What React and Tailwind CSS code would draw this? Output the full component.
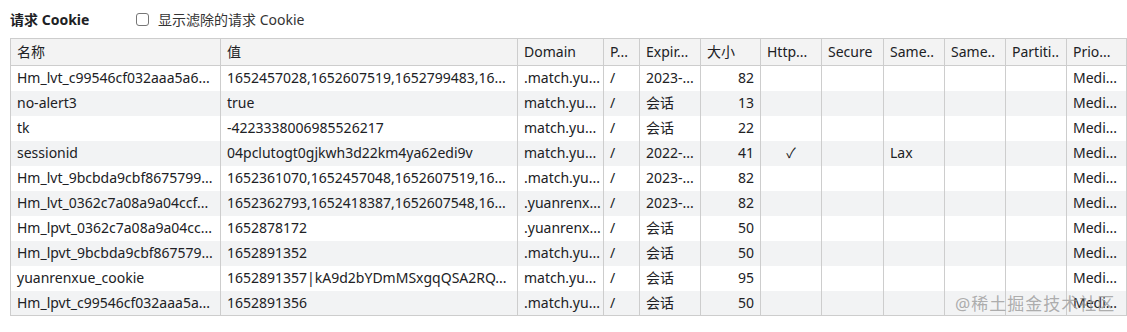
const cols = [
  { label: '名称', w: 'w-[210px]' },
  { label: '值', w: 'w-[297px]' },
  { label: 'Domain', w: 'w-[86px]' },
  { label: 'P...', w: 'w-[36px]' },
  { label: 'Expir...', w: 'w-[61px]' },
  { label: '大小', w: 'w-[60px]' },
  { label: 'Http...', w: 'w-[61px]' },
  { label: 'Secure', w: 'w-[62px]' },
  { label: 'Same..', w: 'w-[61px]' },
  { label: 'Same..', w: 'w-[61px]' },
  { label: 'Partiti..', w: 'w-[61px]' },
  { label: 'Prio...', w: 'w-[60px]' },
];

const rows = [
  ['Hm_lvt_c99546cf032aaa5a6...', '1652457028,1652607519,1652799483,16...', '.match.yu...', '/', '2023-...', '82', '', '', '', '', '', 'Medi...'],
  ['no-alert3', 'true', 'match.yu...', '/', '会话', '13', '', '', '', '', '', 'Medi...'],
  ['tk', '-4223338006985526217', 'match.yu...', '/', '会话', '22', '', '', '', '', '', 'Medi...'],
  ['sessionid', '04pclutogt0gjkwh3d22km4ya62edi9v', 'match.yu...', '/', '2022-...', '41', '✓', '', 'Lax', '', '', 'Medi...'],
  ['Hm_lvt_9bcbda9cbf8675799...', '1652361070,1652457048,1652607519,16...', '.match.yu...', '/', '2023-...', '82', '', '', '', '', '', 'Medi...'],
  ['Hm_lvt_0362c7a08a9a04ccf...', '1652362793,1652418387,1652607548,16...', '.yuanrenx...', '/', '2023-...', '82', '', '', '', '', '', 'Medi...'],
  ['Hm_lpvt_0362c7a08a9a04cc...', '1652878172', '.yuanrenx...', '/', '会话', '50', '', '', '', '', '', 'Medi...'],
  ['Hm_lpvt_9bcbda9cbf867579...', '1652891352', '.match.yu...', '/', '会话', '50', '', '', '', '', '', 'Medi...'],
  ['yuanrenxue_cookie', '1652891357|kA9d2bYDmMSxgqQSA2RQ...', 'match.yu...', '/', '会话', '95', '', '', '', '', '', 'Medi...'],
  ['Hm_lpvt_c99546cf032aaa5a...', '1652891356', '.match.yu...', '/', '会话', '50', '', '', '', '', '', 'Medi...'],
];

function cellAlign(i) {
  if (i === 5) return 'text-right pr-[6px]';
  if (i === 6) return 'text-center';
  return 'pl-[6px]';
}

export default function App() {
  return (
    <div className="relative w-[1127px] h-[332px] bg-white text-[14px] text-[#202124] font-['Noto_Sans','Noto_Sans_CJK_SC',sans-serif] overflow-hidden">
      <div className="flex items-center h-[38px] pl-[10px] pt-[1px]">
        <span className="font-bold w-[126px]">请求 Cookie</span>
        <label className="flex items-center gap-[9px] text-[#333]">
          <span className="w-[13px] h-[13px] border border-[#767676] rounded-[3px] bg-white" />
          显示滤除的请求 Cookie
        </label>
      </div>
      <div className="ml-[10px] w-[1117px]">
        <table className="table-fixed border-collapse w-[1116px] leading-[18px]">
          <colgroup>
            {cols.map((c, i) => (
              <col key={i} className={c.w} />
            ))}
          </colgroup>
          <thead>
            <tr className="bg-[#f3f3f3] h-[27px]">
              {cols.map((c, i) => (
                <th
                  key={i}
                  className="border border-[#cdcdcd] font-normal text-left pl-[6px] whitespace-nowrap overflow-hidden"
                >
                  {c.label}
                </th>
              ))}
            </tr>
          </thead>
          <tbody>
            {rows.map((r, ri) => (
              <tr key={ri} className={`h-[25px] ${ri % 2 === 1 ? 'bg-[#f2f3f4]' : 'bg-white'}`}>
                {r.map((v, ci) => (
                  <td
                    key={ci}
                    className={`border-x border-[#cdcdcd] whitespace-nowrap overflow-hidden ${cellAlign(ci)} ${ri === rows.length - 1 ? 'border-b' : ''}`}
                  >
                    {v}
                  </td>
                ))}
              </tr>
            ))}
          </tbody>
        </table>
      </div>
      <div className="absolute left-[955px] top-[291px] text-[17px] text-[#9a9a9a]/80 tracking-[1px] pointer-events-none">
        @稀土掘金技术社区
      </div>
    </div>
  );
}
